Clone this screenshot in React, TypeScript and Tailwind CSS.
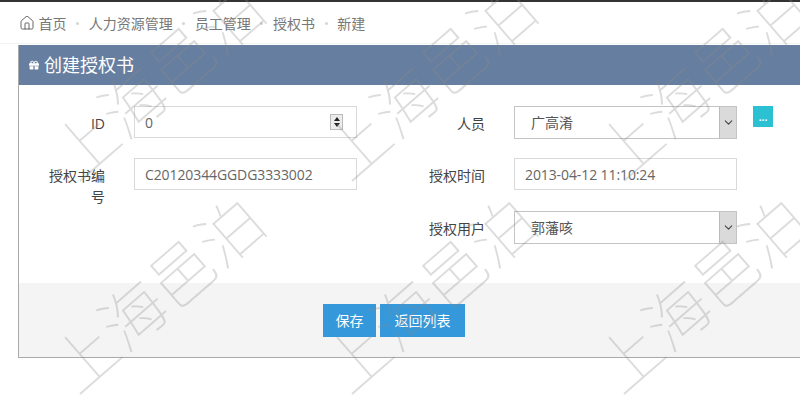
import { House, ChevronDown } from 'lucide-react';
import { FaGift } from 'react-icons/fa';

const crumbs = ['人力资源管理', '员工管理', '授权书', '新建'];
const font = "font-['Open_Sans','Noto_Sans_CJK_SC',sans-serif]";

function Dot() {
  return <span className="mx-[9.6px] h-[3px] w-[3px] rounded-full bg-[#d5d5d5]" />;
}

function Label({ children }: { children: string }) {
  return (
    <label className="mr-[29px] ml-auto w-[60px] pt-[7px] text-right text-[14px] leading-[21px] text-[#444]">
      {children}
    </label>
  );
}

function TextBox({ value, spinner }: { value: string; spinner?: boolean }) {
  return (
    <div className="flex h-[32px] w-[223px] items-center justify-between border border-[#d9d9d9] bg-white pr-[13px] pl-[10px] text-[14px] text-[#666]">
      <span className="tracking-[-0.1px]">{value}</span>
      {spinner && (
        <span className="flex h-[16px] w-[13px] flex-col items-center justify-center gap-[2px] border border-[#bbb] bg-[#ececec]">
          <span className="h-0 w-0 border-x-[3px] border-b-[4px] border-x-transparent border-b-[#222]" />
          <span className="h-0 w-0 border-x-[3px] border-t-[4px] border-x-transparent border-t-[#222]" />
        </span>
      )}
    </div>
  );
}

function SelectBox({ value }: { value: string }) {
  return (
    <div className="flex h-[33px] w-[223px] items-center justify-between border border-[#c4c4c4] bg-white pl-[16px] text-[14px] text-[#555]">
      <span>{value}</span>
      <span className="flex h-full w-[17px] items-center justify-center border-l border-[#bbb] bg-[#dadada]">
        <ChevronDown size={13} className="text-[#444]" />
      </span>
    </div>
  );
}

export default function App() {
  return (
    <div className={`relative h-[405px] w-[800px] overflow-hidden bg-white ${font}`}>
      <div className="h-[2px] bg-[#333]" />
      <div className="flex h-[42px] items-center border-b border-[#f3f3f3] pt-px pl-[19px] text-[14px] text-[#777]">
        <House size={16} strokeWidth={1.5} className="mr-[3.5px] text-[#666]" />
        <span>首页</span>
        {crumbs.map((c) => (
          <span key={c} className="flex items-center">
            <Dot />
            <span>{c}</span>
          </span>
        ))}
      </div>

      <div className="mt-px ml-[18px] w-[800px] border-b border-l border-[#aaa]">
        <div className="flex h-[40px] items-center bg-[#667e9f] pl-[10px] text-[18px] text-white">
          <FaGift size={10} className="mr-[5px]" />
          创建授权书
        </div>
        <div className="grid h-[198px] grid-cols-[380px_380px] content-start gap-y-[20px] pt-[21px]">
          <div className="flex h-[32px] w-[338px]">
            <Label>ID</Label>
            <TextBox value="0" spinner />
          </div>
          <div className="flex h-[32px] w-[338px]">
            <Label>人员</Label>
            <div className="relative">
              <SelectBox value="广高淆" />
              <span className="absolute top-0 left-[239px] flex h-[21px] w-[20px] items-center justify-center bg-[#2bc0d2] text-[10px] leading-none font-bold text-white">
                ...
              </span>
            </div>
          </div>
          <div className="flex h-[32px] w-[338px]">
            <Label>授权书编号</Label>
            <TextBox value="C20120344GGDG3333002" />
          </div>
          <div className="flex h-[32px] w-[338px]">
            <Label>授权时间</Label>
            <TextBox value="2013-04-12 11:10:24" />
          </div>
          <div />
          <div className="mt-px flex h-[33px] w-[338px]">
            <Label>授权用户</Label>
            <SelectBox value="郭藩咳" />
          </div>
        </div>
        <div className="flex h-[74px] gap-[4px] bg-[#f4f4f4] pt-[21px] pl-[304px] text-[14px] text-white">
          <button className="h-[33px] w-[53px] bg-[#3498db]">保存</button>
          <button className="h-[33px] w-[85px] bg-[#3498db]">返回列表</button>
        </div>
      </div>

      <div className="pointer-events-none absolute top-[-29px] left-[19px] grid grid-cols-[repeat(3,272px)] auto-rows-[213px] font-['Noto_Sans_CJK_SC',sans-serif] text-[64px] font-thin text-[#8a8a8a]/30">
        {Array.from({ length: 6 }, (_, i) => (
          <div key={i} className="flex items-center justify-center">
            <span className="-rotate-[41deg] whitespace-nowrap">上海邑泊</span>
          </div>
        ))}
      </div>
    </div>
  );
}
